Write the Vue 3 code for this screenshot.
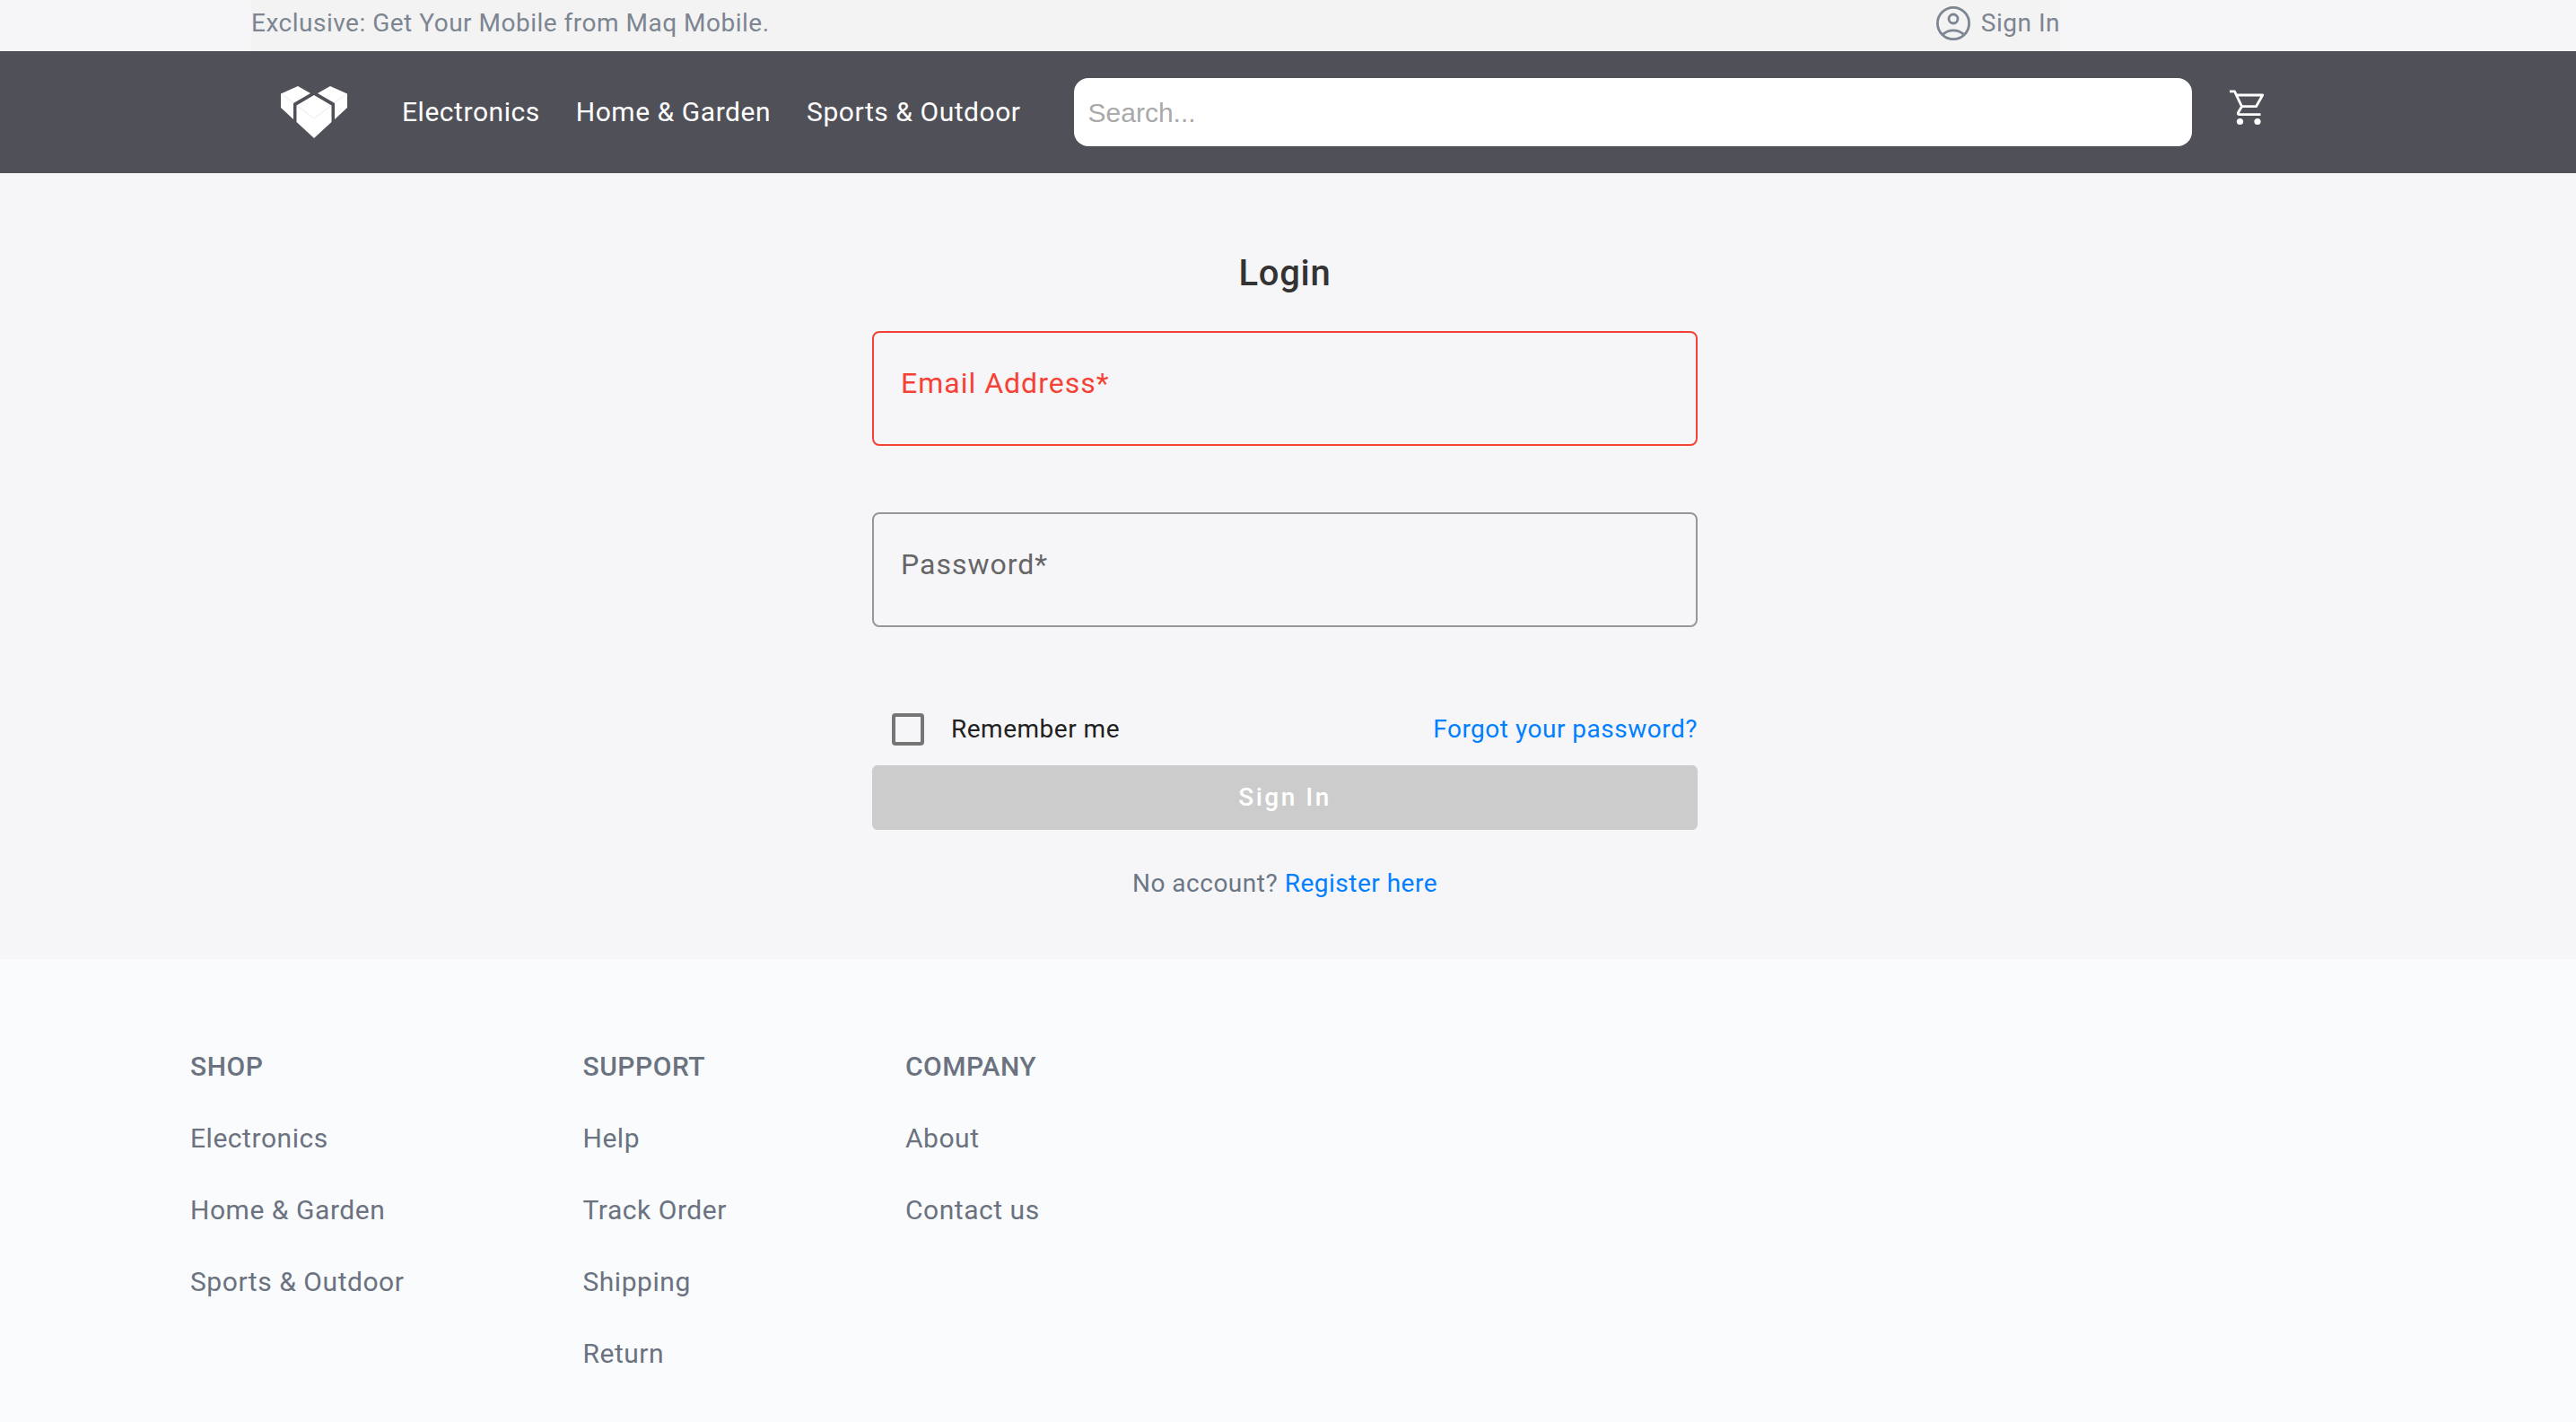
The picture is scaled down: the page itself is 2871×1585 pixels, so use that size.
<script setup>
import { ref } from 'vue'

const search = ref('')
const email = ref('')
const password = ref('')
const remember = ref(false)

const categories = ['Electronics', 'Home & Garden', 'Sports & Outdoor']

const footerColumns = [
  { title: 'SHOP', links: categories },
  { title: 'SUPPORT', links: ['Help', 'Track Order', 'Shipping', 'Return'] },
  { title: 'COMPANY', links: ['About', 'Contact us'] },
]
</script>

<template>
  <div class="page">
    <div class="topbar">
      <div class="topbar-inner">
        <span>Exclusive: Get Your Mobile from Maq Mobile.</span>
        <a href="#" class="account">
          <svg width="38" height="38" viewBox="0 0 38 38" fill="none" stroke="currentColor" stroke-width="2.8" aria-hidden="true">
            <circle cx="19" cy="19" r="17.6" />
            <circle cx="19" cy="14" r="5" />
            <path d="M7 31.6C14 25.2 24 25.2 31 31.6" />
          </svg>
          Sign In
        </a>
      </div>
    </div>

    <header class="header">
      <a href="#" class="logo" aria-label="Home">
        <svg width="74" height="58" viewBox="0 0 74 58" aria-hidden="true">
          <g fill="#fff">
            <path d="M0 8.5 19 0 33 8 14 19V37L0 24Z" />
            <path d="M74 8.5 55 0 41 8 60 19V37L74 24Z" />
            <path d="M37 10 56.500 21.500V40L37 58 17.500 40V21.500Z" />
          </g>
          <g fill="none" stroke="#e9e9ea" stroke-width="1">
            <path d="M1 9 14 18.500M73 9 60 18.500M18 22 37 36 56 22" />
          </g>
        </svg>
      </a>
      <nav class="nav">
        <a v-for="item in categories" :key="item" href="#">{{ item }}</a>
      </nav>
      <input v-model="search" class="search" type="search" placeholder="Search..." aria-label="Search" />
      <a href="#" class="cart" aria-label="Cart">
        <svg width="40" height="40" viewBox="0 0 40 40" fill="none" stroke="currentColor" stroke-width="2.8" stroke-linejoin="round" aria-hidden="true">
          <path d="M0 1.800H5.500L13.500 18.700M7.500 6H36.700L29.500 18.700H13.500L9.500 25.500Q8.700 27.700 11 27.700H34.500" />
          <g fill="currentColor" stroke="none">
            <circle cx="11.500" cy="35.500" r="3.600" />
            <circle cx="31" cy="35.500" r="3.600" />
          </g>
        </svg>
      </a>
    </header>

    <main class="main">
      <form class="login" @submit.prevent>
        <h1>Login</h1>
        <div class="field invalid">
          <input id="email" v-model="email" type="email" placeholder=" " />
          <label for="email">Email Address*</label>
        </div>
        <div class="field">
          <input id="password" v-model="password" type="password" placeholder=" " />
          <label for="password">Password*</label>
        </div>
        <div class="options">
          <label class="remember">
            <input v-model="remember" type="checkbox" />
            Remember me
          </label>
          <a href="#">Forgot your password?</a>
        </div>
        <button type="submit" disabled>Sign In</button>
        <p class="register">No account? <a href="#">Register here</a></p>
      </form>
    </main>

    <footer class="footer">
      <section v-for="column in footerColumns" :key="column.title">
        <h2>{{ column.title }}</h2>
        <ul>
          <li v-for="link in column.links" :key="link"><a href="#">{{ link }}</a></li>
        </ul>
      </section>
    </footer>
  </div>
</template>

<style>
body {
  margin: 0;
  background: #f9fbfd;
}
</style>

<style scoped>
.page {
  font-family: Roboto, sans-serif;
  font-size: 28px;
  font-weight: 400;
  line-height: 40px;
  background: #f6f6f8;
}

* {
  box-sizing: border-box;
}

a {
  text-decoration: none;
  color: inherit;
}

/* Material body tracking */
.topbar,
.nav a,
.options,
.register,
h1,
h2,
li {
  letter-spacing: 0.018em;
}

.topbar {
  padding: 0 575px 0 280px;
}

.topbar-inner {
  display: flex;
  justify-content: space-between;
  padding: 6px 0 11px;
  color: #7d8592;
  background: #f3f3f3;
}

.account {
  display: flex;
  align-items: center;
  gap: 12px;
}

.header {
  display: flex;
  align-items: center;
  padding: 30px 346px 30px 313px;
  color: #fff;
  background: #505058;
}

.logo,
.cart {
  display: flex;
}

.nav {
  display: flex;
  gap: 40px;
  margin-left: 61px;
  font-size: 30px;
}

.search {
  flex: 1;
  min-width: 0;
  height: 76px;
  margin: 0 42px 0 59px;
  padding: 2px 16px 0;
  border: 0;
  border-radius: 16px;
  background: #fff;
  color: #333;
  font: 400 30px/40px "Liberation Sans", Arial, sans-serif;
}

.search::placeholder {
  color: #a9a9a9;
  opacity: 1;
}

.cart {
  margin-bottom: 10px;
}

.main {
  display: flex;
  justify-content: center;
  padding: 88px 7px 64px 0;
}

.login {
  display: flex;
  flex-direction: column;
  width: 920px;
}

h1 {
  margin: 0 0 40px;
  font-size: 40px;
  font-weight: 500;
  line-height: 48px;
  text-align: center;
  color: #333;
}

.field {
  position: relative;
  margin-bottom: 74px;
  color: #666668;
}

.field input {
  display: block;
  width: 100%;
  height: 128px;
  padding: 0 32px;
  border: 2px solid #97979a;
  border-radius: 8px;
  background: transparent;
  font: 400 32px/40px Roboto, sans-serif;
}

.field label {
  position: absolute;
  top: 38px;
  left: 32px;
  font-size: 32px;
  letter-spacing: 1px;
  pointer-events: none;
}

.field.invalid {
  color: #f44336;
}

.field.invalid input {
  border-color: #f44336;
}

.options {
  display: flex;
  justify-content: space-between;
  align-items: center;
  margin: 20px 0;
}

.options a,
.register a {
  color: #007fff;
}

.remember {
  display: flex;
  align-items: center;
  gap: 30px;
  padding-left: 22px;
  color: #212121;
}

.remember input {
  appearance: none;
  width: 36px;
  height: 36px;
  margin: 0;
  border: 4px solid #757575;
  border-radius: 4px;
}

button {
  height: 72px;
  border: 0;
  border-radius: 6px;
  background: #ccc;
  color: #fff;
  font: 500 28px/40px Roboto, sans-serif;
  letter-spacing: 0.09em;
}

.register {
  margin: 40px 0 0;
  text-align: center;
  color: #6b7785;
}

.footer {
  display: flex;
  gap: 199px;
  padding: 100px 212px 56px;
  font-size: 30px;
  color: #6b7280;
  background: #f9fbfd;
}

h2 {
  margin: 0;
  font-size: 30px;
  font-weight: 500;
  line-height: 40px;
}

ul {
  margin: 0;
  padding: 0;
  list-style: none;
}

li {
  margin-top: 40px;
}
</style>
